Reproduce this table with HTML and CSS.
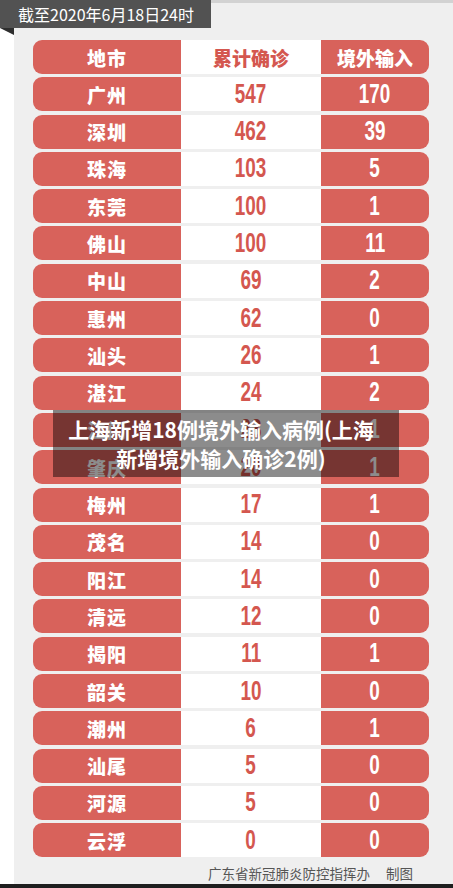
FILE: index.html
```html
<!DOCTYPE html>
<html lang="zh">
<head>
<meta charset="utf-8">
<link rel="stylesheet" href="styles.css">
</head>
<body>
<div class="page">
  <div class="gutter"></div>
  <div class="panel">
    <div class="table">
      <div class="row head"><div class="c city">地市</div><div class="c mid">累计确诊</div><div class="c imp">境外输入</div></div>
      <div class="row"><div class="c city">广州</div><div class="c mid"><span class="n">547</span></div><div class="c imp"><span class="n">170</span></div></div>
      <div class="row"><div class="c city">深圳</div><div class="c mid"><span class="n">462</span></div><div class="c imp"><span class="n">39</span></div></div>
      <div class="row"><div class="c city">珠海</div><div class="c mid"><span class="n">103</span></div><div class="c imp"><span class="n">5</span></div></div>
      <div class="row"><div class="c city">东莞</div><div class="c mid"><span class="n">100</span></div><div class="c imp"><span class="n">1</span></div></div>
      <div class="row"><div class="c city">佛山</div><div class="c mid"><span class="n">100</span></div><div class="c imp"><span class="n">11</span></div></div>
      <div class="row"><div class="c city">中山</div><div class="c mid"><span class="n">69</span></div><div class="c imp"><span class="n">2</span></div></div>
      <div class="row"><div class="c city">惠州</div><div class="c mid"><span class="n">62</span></div><div class="c imp"><span class="n">0</span></div></div>
      <div class="row"><div class="c city">汕头</div><div class="c mid"><span class="n">26</span></div><div class="c imp"><span class="n">1</span></div></div>
      <div class="row"><div class="c city">湛江</div><div class="c mid"><span class="n">24</span></div><div class="c imp"><span class="n">2</span></div></div>
      <div class="row"><div class="c city">江门</div><div class="c mid"><span class="n">23</span></div><div class="c imp"><span class="n">1</span></div></div>
      <div class="row"><div class="c city">肇庆</div><div class="c mid"><span class="n">20</span></div><div class="c imp"><span class="n">1</span></div></div>
      <div class="row"><div class="c city">梅州</div><div class="c mid"><span class="n">17</span></div><div class="c imp"><span class="n">1</span></div></div>
      <div class="row"><div class="c city">茂名</div><div class="c mid"><span class="n">14</span></div><div class="c imp"><span class="n">0</span></div></div>
      <div class="row"><div class="c city">阳江</div><div class="c mid"><span class="n">14</span></div><div class="c imp"><span class="n">0</span></div></div>
      <div class="row"><div class="c city">清远</div><div class="c mid"><span class="n">12</span></div><div class="c imp"><span class="n">0</span></div></div>
      <div class="row"><div class="c city">揭阳</div><div class="c mid"><span class="n">11</span></div><div class="c imp"><span class="n">1</span></div></div>
      <div class="row"><div class="c city">韶关</div><div class="c mid"><span class="n">10</span></div><div class="c imp"><span class="n">0</span></div></div>
      <div class="row"><div class="c city">潮州</div><div class="c mid"><span class="n">6</span></div><div class="c imp"><span class="n">1</span></div></div>
      <div class="row"><div class="c city">汕尾</div><div class="c mid"><span class="n">5</span></div><div class="c imp"><span class="n">0</span></div></div>
      <div class="row"><div class="c city">河源</div><div class="c mid"><span class="n">5</span></div><div class="c imp"><span class="n">0</span></div></div>
      <div class="row"><div class="c city">云浮</div><div class="c mid"><span class="n">0</span></div><div class="c imp"><span class="n">0</span></div></div>
    </div>
    <div class="footer"><span>广东省新冠肺炎防控指挥办</span><span>制图</span></div>
  </div>
</div>
<div class="bottombar"></div>
<div class="badge">截至2020年6月18日24时</div>
<div class="fold"></div>
<div class="overlay">上海新增18例境外输入病例(上海<br>新增境外输入确诊2例)</div>
</body>
</html>
```

FILE: styles.css
```css
* { box-sizing: border-box; }
html, body { margin: 0; padding: 0; }
body {
  width: 453px;
  height: 888px;
  background: #ffffff;
  position: relative;
  overflow: hidden;
  font-family: "Noto Sans CJK SC", "Noto Sans", sans-serif;
}
.page {
  display: flex;
  height: 884px;
}
.gutter {
  width: 14px;
  flex: none;
  background: #ffffff;
}
.panel {
  flex: 1;
  background: #efefef;
  border-top: 3px solid #d2d2d2;
  padding: 37px 24px 0 19px;
  display: flex;
  flex-direction: column;
}
.table {
  display: flex;
  flex-direction: column;
  gap: 3.3px;
}
.row {
  display: grid;
  grid-template-columns: 148px 140px 108px;
  height: 34px;
}
.c {
  display: flex;
  align-items: center;
  justify-content: center;
  font-weight: 900;
  font-size: 19px;
  line-height: 1;
}
.city {
  background: #d8625b;
  color: #ffffff;
  border-radius: 9px 0 0 9px;
  letter-spacing: 1px;
}
.mid {
  background: #ffffff;
  color: #d4574f;
}
.imp {
  background: #d8625b;
  color: #ffffff;
  border-radius: 0 9px 9px 0;
}
.n {
  display: inline-block;
  font-family: "Liberation Sans", "DejaVu Sans", sans-serif;
  font-weight: 700;
  font-size: 27px;
  transform: scaleX(0.7);
  letter-spacing: 0;
}
.footer {
  display: flex;
  justify-content: flex-end;
  gap: 16px;
  margin-top: 6px;
  padding-right: 16px;
  font-size: 13.5px;
  color: #555555;
  line-height: 20px;
}
.bottombar {
  height: 4px;
  background: #1e1e1e;
}
.badge {
  position: absolute;
  left: 0;
  top: 0;
  width: 211px;
  height: 28px;
  background: #525252;
  color: #ffffff;
  font-size: 16px;
  line-height: 28px;
  padding-left: 18px;
  white-space: nowrap;
}
.fold {
  position: absolute;
  left: 0;
  top: 28px;
  width: 0;
  height: 0;
  border-top: 7px solid #2e2e2e;
  border-left: 14px solid transparent;
}
.overlay {
  position: absolute;
  left: 53px;
  top: 410px;
  width: 346px;
  height: 67px;
  background: rgba(0, 0, 0, 0.45);
  color: #ffffff;
  font-weight: 700;
  font-size: 21px;
  line-height: 29px;
  text-align: center;
  padding: 5px 10px 0 0;
}
```
